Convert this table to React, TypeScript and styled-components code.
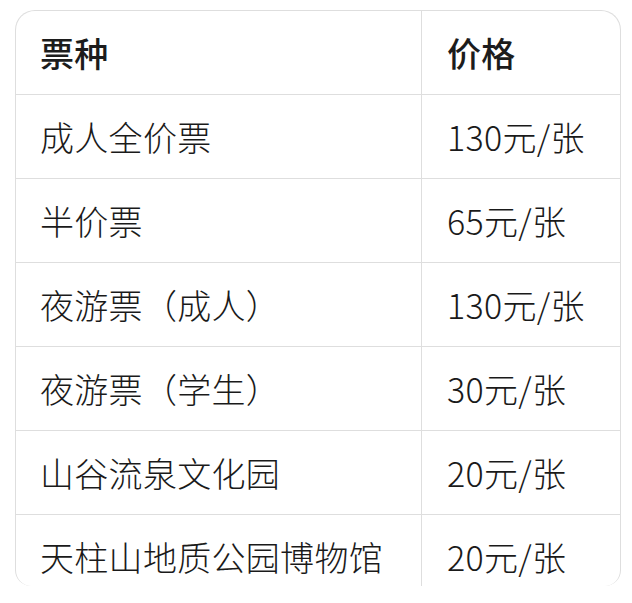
import React from "react";
import styled, { createGlobalStyle } from "styled-components";

const Global = createGlobalStyle`
  html, body { margin: 0; padding: 0; background: #ffffff; }
  body { font-family: "Noto Sans CJK SC", "Noto Sans", sans-serif; }
`;

const Page = styled.div`
  padding: 10px 11px 0 15px;
  height: 603px;
  box-sizing: border-box;
  overflow: hidden;
`;

const Frame = styled.div`
  width: 606px;
  height: 576px;
  box-sizing: border-box;
  border: 1px solid #dedede;
  border-bottom: none;
  border-radius: 20px 20px 16px 16px;
  overflow: hidden;
`;

const Table = styled.div`
  display: grid;
  grid-template-columns: 405px 1fr;
`;

const Cell = styled.div<{ $head?: boolean; $right?: boolean }>`
  box-sizing: border-box;
  height: 84px;
  display: flex;
  align-items: center;
  padding-left: ${(p) => (p.$right ? "25px" : "24px")};
  padding-bottom: 1px;
  border-bottom: 1px solid #dedede;
  border-left: ${(p) => (p.$right ? "1px solid #dedede" : "none")};
  font-size: 34px;
  font-weight: ${(p) => (p.$head ? 500 : 300)};
  color: ${(p) => (p.$head ? "#1c1c1c" : "#1a1a1a")};
  white-space: nowrap;
  letter-spacing: 0.3px;
`;

const rows: [string, string][] = [
  ["成人全价票", "130元/张"],
  ["半价票", "65元/张"],
  ["夜游票（成人）", "130元/张"],
  ["夜游票（学生）", "30元/张"],
  ["山谷流泉文化园", "20元/张"],
  ["天柱山地质公园博物馆", "20元/张"],
];

export default function App() {
  return (
    <>
      <Global />
      <Page>
        <Frame>
          <Table>
            <Cell $head>票种</Cell>
            <Cell $head $right>价格</Cell>
            {rows.map(([a, b]) => (
              <React.Fragment key={a}>
                <Cell>{a}</Cell>
                <Cell $right>{b}</Cell>
              </React.Fragment>
            ))}
          </Table>
        </Frame>
      </Page>
    </>
  );
}
